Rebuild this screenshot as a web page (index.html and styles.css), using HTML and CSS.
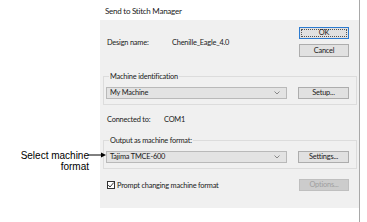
FILE: index.html
```html
<!DOCTYPE html>
<html>
<head>
<meta charset="utf-8">
<link rel="stylesheet" href="styles.css">
</head>
<body>
<div class="page">
  <div class="callout">
    <div class="callout-text">Select machine<br>format</div>
    <svg class="callout-arrow" width="20" height="6" viewBox="0 0 20 6">
      <line x1="0" y1="3" x2="15" y2="3" stroke="#000" stroke-width="1"/>
      <polygon points="13,0.5 18,3 13,5.5" fill="#000"/>
    </svg>
  </div>
  <div class="dialog">
    <div class="titlebar">Send to Stitch Manager</div>
    <div class="client">
      <div class="header">
        <div class="design">
          <span class="lbl lbl-design">Design name:</span>
          <span class="val">Chenille_Eagle_4.0</span>
        </div>
        <div class="btncol">
          <div class="btn btn-default"><span class="focus">OK</span></div>
          <div class="btn btn-cancel">Cancel</div>
        </div>
      </div>
      <div class="group group1">
        <div class="group-label">Machine identification</div>
        <div class="group-row">
          <div class="combo"><span>My Machine</span><svg class="chev" width="6" height="4" viewBox="0 0 6 4"><polyline points="0.5,0.5 3,3 5.5,0.5" fill="none" stroke="#888" stroke-width="1"/></svg></div>
          <div class="btn">Setup...</div>
        </div>
      </div>
      <div class="connected">
        <span class="lbl lbl-conn">Connected to:</span>
        <span class="val">COM1</span>
      </div>
      <div class="group group2">
        <div class="group-label">Output as machine format:</div>
        <div class="group-row">
          <div class="combo"><span>Tajima TMCE-600</span><svg class="chev" width="6" height="4" viewBox="0 0 6 4"><polyline points="0.5,0.5 3,3 5.5,0.5" fill="none" stroke="#888" stroke-width="1"/></svg></div>
          <div class="btn">Settings...</div>
        </div>
      </div>
      <div class="prompt">
        <div class="check-wrap">
          <span class="checkbox"><svg width="8" height="8" viewBox="0 0 8 8"><polyline points="1.2,4 3,6 6.8,1.5" fill="none" stroke="#222" stroke-width="0.9"/></svg></span>
          <span class="check-text">Prompt changing machine format</span>
        </div>
        <div class="btn btn-disabled">Options...</div>
      </div>
    </div>
  </div>
</div>
</body>
</html>
```
FILE: styles.css
```css
html, body {
  margin: 0;
  padding: 0;
  background: #fff;
}
.page {
  display: flex;
  width: 367px;
  height: 222px;
  overflow: hidden;
  font-family: Lato, "Noto Sans", sans-serif;
  font-size: 7.4px;
  letter-spacing: -0.2px;
  color: #1a1a1a;
}
.callout {
  width: 100px;
  flex: none;
  position: relative;
  letter-spacing: 0;
}
.callout-text {
  width: 89px;
  padding-top: 150px;
  text-align: right;
  font-family: "Liberation Sans", Arial, sans-serif;
  font-size: 10px;
  line-height: 11px;
  color: #000;
}
.callout-arrow {
  position: absolute;
  left: 88px;
  top: 152px;
}
.dialog {
  width: 259px;
  flex: none;
  border-right: 1px solid #a8a8a8;
  display: flex;
  flex-direction: column;
}
.titlebar {
  height: 20px;
  padding-left: 5px;
  line-height: 22px;
  font-size: 8px;
  letter-spacing: -0.25px;
  color: #1a1a1a;
}
.client {
  height: 188px;
  background: #f0f0f0;
  display: flex;
  flex-direction: column;
}
.header {
  display: flex;
  justify-content: space-between;
  align-items: center;
  padding: 7px 10px 0 7px;
}
.design {
  display: flex;
  align-items: center;
  padding-top: 1px;
}
.lbl-design {
  width: 65px;
}
.btncol {
  display: flex;
  flex-direction: column;
  gap: 5px;
}
.btn {
  box-sizing: border-box;
  width: 51px;
  height: 12px;
  background: #e1e1e1;
  border: 1px solid #adadad;
  display: flex;
  align-items: center;
  justify-content: center;
  line-height: 10px;
  flex: none;
}
.btncol .btn {
  width: 50px;
}
.btn-default {
  border-color: #2c7bd0;
  padding: 1px;
}
.focus {
  flex: 1;
  align-self: stretch;
  border: 1px dotted #555;
  display: flex;
  align-items: center;
  justify-content: center;
  line-height: 8px;
}
.btn-cancel {
  height: 13px;
}
.group {
  margin: 0 2px 0 3px;
  border: 1px solid #dcdcdc;
  display: flex;
  flex-direction: column;
  box-sizing: border-box;
}
.group1 {
  margin-top: 19px;
  height: 29px;
}
.group2 {
  margin-top: 15px;
  height: 29px;
}
.group-label {
  margin-top: -5px;
  margin-left: 5px;
  padding: 0 1px;
  line-height: 10px;
  align-self: flex-start;
  background: #f0f0f0;
}
.group-row {
  display: flex;
  align-items: center;
  justify-content: space-between;
  padding: 4px 7px 0 2px;
}
.combo {
  box-sizing: border-box;
  width: 181px;
  height: 12px;
  margin-top: 1px;
  background: #e3e3e3;
  border: 1px solid #b9b9b9;
  display: flex;
  align-items: center;
  justify-content: space-between;
  padding: 0 6px 0 3px;
  line-height: 10px;
}
.chev {
  display: block;
}
.connected {
  display: flex;
  align-items: center;
  padding: 10px 0 0 7px;
  line-height: 10px;
}
.lbl-conn {
  width: 57px;
}
.prompt {
  display: flex;
  align-items: center;
  justify-content: space-between;
  padding: 10px 10px 0 7px;
}
.check-wrap {
  display: flex;
  align-items: center;
  gap: 2px;
}
.checkbox {
  box-sizing: border-box;
  width: 8px;
  height: 8px;
  border: 1px solid #333;
  background: #fff;
  display: flex;
  align-items: center;
  justify-content: center;
  overflow: hidden;
}
.checkbox svg {
  display: block;
  flex: none;
}
.btn-disabled {
  width: 50px;
  height: 12px;
  background: #cccccc;
  border-color: #bfbfbf;
  color: #a0a0a0;
}
```
